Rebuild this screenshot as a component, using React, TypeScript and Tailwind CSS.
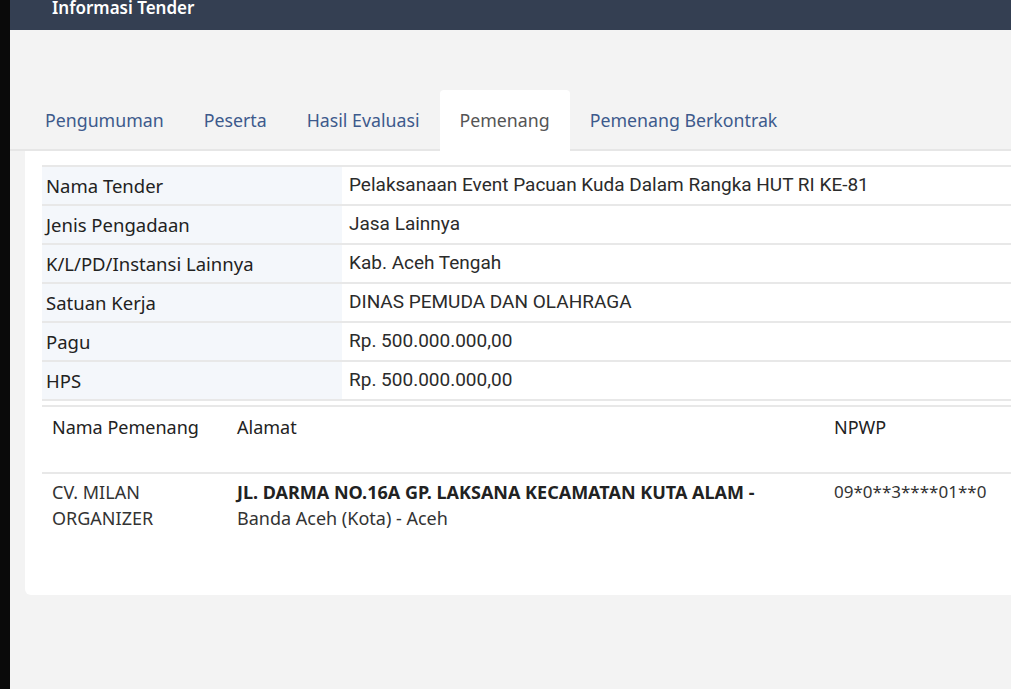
import React from 'react'

const tabs = ['Pengumuman', 'Peserta', 'Hasil Evaluasi', 'Pemenang', 'Pemenang Berkontrak']

const rows: [string, string][] = [
	['Nama Tender', 'Pelaksanaan Event Pacuan Kuda Dalam Rangka HUT RI KE-81'],
	['Jenis Pengadaan', 'Jasa Lainnya'],
	['K/L/PD/Instansi Lainnya', 'Kab. Aceh Tengah'],
	['Satuan Kerja', 'DINAS PEMUDA DAN OLAHRAGA'],
	['Pagu', 'Rp. 500.000.000,00'],
	['HPS', 'Rp. 500.000.000,00'],
]

const label = { fontFamily: '"Noto Sans", Lato, sans-serif' }
const value = { fontFamily: 'Roboto, "Liberation Sans", sans-serif' }

export default function App() {
	return (
		<div className="flex h-[689px] w-[1011px] overflow-hidden bg-black">
			<div className="w-[10px] shrink-0 bg-[#0a0a0a]" />
			<div className="flex flex-1 flex-col bg-[#f3f3f3]">
				{/* Header */}
				<div className="h-[30px] shrink-0 overflow-hidden bg-[#343f52] pl-[42px]">
					<div className="-mt-[4px] text-[17px] font-semibold leading-[24px] text-white" style={label}>
						Informasi Tender
					</div>
				</div>

				{/* Tabs */}
				<div className="mt-[60px] flex h-[61px] border-b-2 border-[#e6e6e6] pl-[15px]">
					{tabs.map((t) => {
						const active = t === 'Pemenang'
						return (
							<div
								key={t}
								className={`-mb-[2px] flex items-center px-[20px] text-[17.75px] ${
									active ? 'rounded-t-[4px] bg-white text-[#555555]' : 'text-[#3d5a8c]'
								}`}
								style={label}
							>
								{t}
							</div>
						)
					})}
				</div>

				{/* Card */}
				<div className="ml-[15px] h-[444px] rounded-bl-[6px] bg-white pl-[17px] pt-[14px]">
					<table className="w-full border-collapse text-[18.5px] text-[#222222]">
						<tbody>
							{rows.map(([k, v]) => (
								<tr key={k} className="h-[39px] border-y-2 border-[#e8e8e8]">
									<td className="w-[300px] bg-[#f4f7fb] pl-[4px]" style={label}>
										{k}
									</td>
									<td className="pl-[7px] text-[19px] text-[#2b2b2b]" style={value}>
										{v}
									</td>
								</tr>
							))}
						</tbody>
					</table>

					<div className="mt-[4px] border-t-2 border-[#e8e8e8] text-[18px] text-[#222222]" style={label}>
						<div className="flex h-[67px] border-b-2 border-[#e8e8e8] pt-[7px]">
							<div className="w-[195px] pl-[10px]">Nama Pemenang</div>
							<div className="w-[597px]">Alamat</div>
							<div>NPWP</div>
						</div>
						<div className="flex pt-[5px] leading-[26px] text-[#333333]">
							<div className="w-[195px] pl-[10px]">
								CV. MILAN
								<br />
								ORGANIZER
							</div>
							<div className="w-[597px]">
								<span className="font-bold text-[#222222]">JL. DARMA NO.16A GP. LAKSANA KECAMATAN KUTA ALAM -</span>
								<br />
								Banda Aceh (Kota) - Aceh
							</div>
							<div className="text-[17px]">09*0**3****01**0</div>
						</div>
					</div>
				</div>
			</div>
		</div>
	)
}
